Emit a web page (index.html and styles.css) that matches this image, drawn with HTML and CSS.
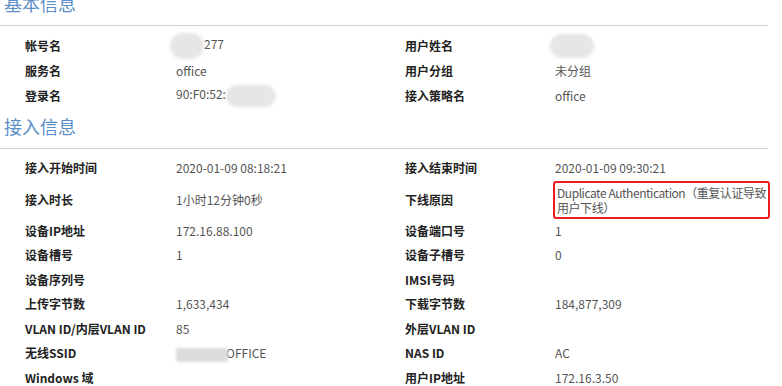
FILE: index.html
```html
<!DOCTYPE html>
<html>
<head>
  <title>在线用户详细信息</title>
  <meta charset="UTF-8" />
  <link rel="stylesheet" href="styles.css">
</head>
<body>

  <div class="page">
    <h3 class="title">基本信息</h3>
    <div class="info">
      <div class="label">帐号名</div>
      <div class="value"><span class="mask mask-acct"></span>277</div>
      <div class="label">用户姓名</div>
      <div class="value"><span class="mask mask-name"></span></div>

      <div class="label">服务名</div>
      <div class="value">office</div>
      <div class="label">用户分组</div>
      <div class="value">未分组</div>

      <div class="label">登录名</div>
      <div class="value">90:F0:52:<span class="mask mask-mac"></span></div>
      <div class="label">接入策略名</div>
      <div class="value">office</div>
    </div>

    <h3 class="title">接入信息</h3>
    <div class="info">
      <div class="label">接入开始时间</div>
      <div class="value">2020-01-09 08:18:21</div>
      <div class="label">接入结束时间</div>
      <div class="value">2020-01-09 09:30:21</div>

      <div class="label">接入时长</div>
      <div class="value">1小时12分钟0秒</div>
      <div class="label">下线原因</div>
      <div class="value"><div class="marked">Duplicate Authentication（重复认证导致<br>用户下线）</div></div>

      <div class="label">设备IP地址</div>
      <div class="value">172.16.88.100</div>
      <div class="label">设备端口号</div>
      <div class="value">1</div>

      <div class="label">设备槽号</div>
      <div class="value">1</div>
      <div class="label">设备子槽号</div>
      <div class="value">0</div>

      <div class="label">设备序列号</div>
      <div class="value"></div>
      <div class="label">IMSI号码</div>
      <div class="value"></div>

      <div class="label">上传字节数</div>
      <div class="value">1,633,434</div>
      <div class="label">下载字节数</div>
      <div class="value">184,877,309</div>

      <div class="label">VLAN ID/内层VLAN ID</div>
      <div class="value">85</div>
      <div class="label">外层VLAN ID</div>
      <div class="value"></div>

      <div class="label">无线SSID</div>
      <div class="value"><span class="mask mask-ssid"></span>OFFICE</div>
      <div class="label">NAS ID</div>
      <div class="value">AC</div>

      <div class="label">Windows 域</div>
      <div class="value"></div>
      <div class="label">用户IP地址</div>
      <div class="value">172.16.3.50</div>
    </div>
  </div>

</body>
</html>
```

FILE: styles.css
```css
body {
  margin: 0;
  background: #fff;
  font-family: "Noto Sans CJK SC", "Liberation Sans", sans-serif;
  font-size: 12px;
  color: #555;
  overflow: hidden;
}

.page {
  width: 768px;
  margin-top: -15px;
}

.title {
  margin: 0;
  padding: 6px 0 10px 4px;
  font-size: 18px;
  line-height: 24px;
  font-weight: normal;
  color: #5b8fc5;
  border-bottom: 1px solid #cfcfcf;
}

.info {
  display: grid;
  grid-template-columns: 151px 229px 150px 1fr;
  grid-auto-rows: minmax(24.5px, auto);
  align-items: center;
  padding: 7px 0 0 25px;
  line-height: 16px;
}

.label {
  font-weight: bold;
  color: #222;
}

.value {
  color: #555;
}

.marked {
  margin-left: -2px;
  padding: 2px;
  border: 2px solid #ee1c1c;
  border-radius: 3px;
  line-height: 15px;
  width: 209px;
  white-space: nowrap;
  letter-spacing: -0.45px;
}

.mask {
  display: inline-block;
  vertical-align: middle;
  background: #e6e6e6;
  border-radius: 12px;
  filter: blur(1.5px);
}

.mask-acct {
  width: 34px;
  height: 26px;
  margin-left: -6px;
  border-radius: 14px;
}

.mask-name {
  width: 44px;
  height: 24px;
  margin-left: -5px;
}

.mask-mac {
  width: 50px;
  height: 22px;
}

.mask-ssid {
  width: 52px;
  height: 14px;
  border-radius: 2px;
  background: #dcdcdc;
  margin-right: -2px;
}
```
